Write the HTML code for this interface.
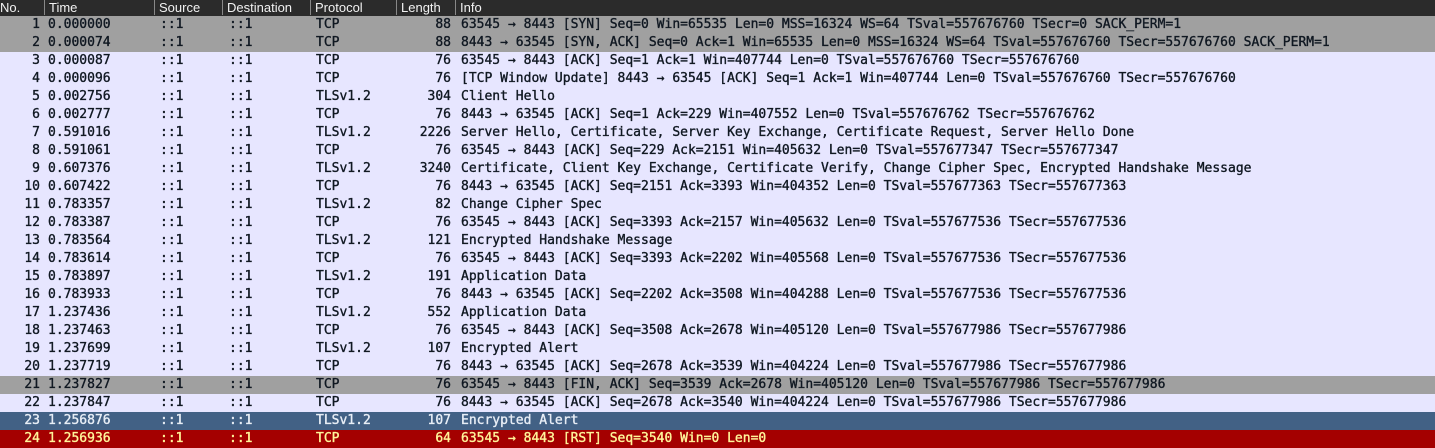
<!DOCTYPE html>
<html><head><meta charset="utf-8"><style>
body{margin:0;width:1435px;height:447px;overflow:hidden;background:#fff;}
.h{height:16px;background:#2b2b2b;color:#f2f2f2;font:13px "Liberation Sans",sans-serif;position:relative;}
.h span{position:absolute;top:0;line-height:15px;border-left:1px solid #888;padding-left:4px;}
.r{height:18px;position:relative;font:13px "DejaVu Sans Mono","Liberation Mono",monospace;line-height:18px;color:#101822;white-space:pre;-webkit-text-stroke:0.35px currentColor;}
.r span{position:absolute;top:0;}
.n{right:1395px;text-align:right}
.t{left:48px}.s{left:160px}.d{left:229px}.p{left:316px}
.l{right:984px;text-align:right}.i{left:461px}
.g{background:#a0a0a0}.w{background:#e7e6ff}
.b{background:#426185;color:#e8eef6}.x{background:#a40000;color:#fff59a}
</style></head><body>
<div class="h"><span style="left:-1px;border:none;padding-left:1px">No.</span><span style="left:44px">Time</span><span style="left:154px">Source</span><span style="left:222px">Destination</span><span style="left:310px">Protocol</span><span style="left:396px">Length</span><span style="left:455px">Info</span></div>
<div class="r g"><span class="n">1</span><span class="t">0.000000</span><span class="s">::1</span><span class="d">::1</span><span class="p">TCP</span><span class="l">88</span><span class="i">63545 → 8443 [SYN] Seq=0 Win=65535 Len=0 MSS=16324 WS=64 TSval=557676760 TSecr=0 SACK_PERM=1</span></div>
<div class="r g"><span class="n">2</span><span class="t">0.000074</span><span class="s">::1</span><span class="d">::1</span><span class="p">TCP</span><span class="l">88</span><span class="i">8443 → 63545 [SYN, ACK] Seq=0 Ack=1 Win=65535 Len=0 MSS=16324 WS=64 TSval=557676760 TSecr=557676760 SACK_PERM=1</span></div>
<div class="r w"><span class="n">3</span><span class="t">0.000087</span><span class="s">::1</span><span class="d">::1</span><span class="p">TCP</span><span class="l">76</span><span class="i">63545 → 8443 [ACK] Seq=1 Ack=1 Win=407744 Len=0 TSval=557676760 TSecr=557676760</span></div>
<div class="r w"><span class="n">4</span><span class="t">0.000096</span><span class="s">::1</span><span class="d">::1</span><span class="p">TCP</span><span class="l">76</span><span class="i">[TCP Window Update] 8443 → 63545 [ACK] Seq=1 Ack=1 Win=407744 Len=0 TSval=557676760 TSecr=557676760</span></div>
<div class="r w"><span class="n">5</span><span class="t">0.002756</span><span class="s">::1</span><span class="d">::1</span><span class="p">TLSv1.2</span><span class="l">304</span><span class="i">Client Hello</span></div>
<div class="r w"><span class="n">6</span><span class="t">0.002777</span><span class="s">::1</span><span class="d">::1</span><span class="p">TCP</span><span class="l">76</span><span class="i">8443 → 63545 [ACK] Seq=1 Ack=229 Win=407552 Len=0 TSval=557676762 TSecr=557676762</span></div>
<div class="r w"><span class="n">7</span><span class="t">0.591016</span><span class="s">::1</span><span class="d">::1</span><span class="p">TLSv1.2</span><span class="l">2226</span><span class="i">Server Hello, Certificate, Server Key Exchange, Certificate Request, Server Hello Done</span></div>
<div class="r w"><span class="n">8</span><span class="t">0.591061</span><span class="s">::1</span><span class="d">::1</span><span class="p">TCP</span><span class="l">76</span><span class="i">63545 → 8443 [ACK] Seq=229 Ack=2151 Win=405632 Len=0 TSval=557677347 TSecr=557677347</span></div>
<div class="r w"><span class="n">9</span><span class="t">0.607376</span><span class="s">::1</span><span class="d">::1</span><span class="p">TLSv1.2</span><span class="l">3240</span><span class="i">Certificate, Client Key Exchange, Certificate Verify, Change Cipher Spec, Encrypted Handshake Message</span></div>
<div class="r w"><span class="n">10</span><span class="t">0.607422</span><span class="s">::1</span><span class="d">::1</span><span class="p">TCP</span><span class="l">76</span><span class="i">8443 → 63545 [ACK] Seq=2151 Ack=3393 Win=404352 Len=0 TSval=557677363 TSecr=557677363</span></div>
<div class="r w"><span class="n">11</span><span class="t">0.783357</span><span class="s">::1</span><span class="d">::1</span><span class="p">TLSv1.2</span><span class="l">82</span><span class="i">Change Cipher Spec</span></div>
<div class="r w"><span class="n">12</span><span class="t">0.783387</span><span class="s">::1</span><span class="d">::1</span><span class="p">TCP</span><span class="l">76</span><span class="i">63545 → 8443 [ACK] Seq=3393 Ack=2157 Win=405632 Len=0 TSval=557677536 TSecr=557677536</span></div>
<div class="r w"><span class="n">13</span><span class="t">0.783564</span><span class="s">::1</span><span class="d">::1</span><span class="p">TLSv1.2</span><span class="l">121</span><span class="i">Encrypted Handshake Message</span></div>
<div class="r w"><span class="n">14</span><span class="t">0.783614</span><span class="s">::1</span><span class="d">::1</span><span class="p">TCP</span><span class="l">76</span><span class="i">63545 → 8443 [ACK] Seq=3393 Ack=2202 Win=405568 Len=0 TSval=557677536 TSecr=557677536</span></div>
<div class="r w"><span class="n">15</span><span class="t">0.783897</span><span class="s">::1</span><span class="d">::1</span><span class="p">TLSv1.2</span><span class="l">191</span><span class="i">Application Data</span></div>
<div class="r w"><span class="n">16</span><span class="t">0.783933</span><span class="s">::1</span><span class="d">::1</span><span class="p">TCP</span><span class="l">76</span><span class="i">8443 → 63545 [ACK] Seq=2202 Ack=3508 Win=404288 Len=0 TSval=557677536 TSecr=557677536</span></div>
<div class="r w"><span class="n">17</span><span class="t">1.237436</span><span class="s">::1</span><span class="d">::1</span><span class="p">TLSv1.2</span><span class="l">552</span><span class="i">Application Data</span></div>
<div class="r w"><span class="n">18</span><span class="t">1.237463</span><span class="s">::1</span><span class="d">::1</span><span class="p">TCP</span><span class="l">76</span><span class="i">63545 → 8443 [ACK] Seq=3508 Ack=2678 Win=405120 Len=0 TSval=557677986 TSecr=557677986</span></div>
<div class="r w"><span class="n">19</span><span class="t">1.237699</span><span class="s">::1</span><span class="d">::1</span><span class="p">TLSv1.2</span><span class="l">107</span><span class="i">Encrypted Alert</span></div>
<div class="r w"><span class="n">20</span><span class="t">1.237719</span><span class="s">::1</span><span class="d">::1</span><span class="p">TCP</span><span class="l">76</span><span class="i">8443 → 63545 [ACK] Seq=2678 Ack=3539 Win=404224 Len=0 TSval=557677986 TSecr=557677986</span></div>
<div class="r g"><span class="n">21</span><span class="t">1.237827</span><span class="s">::1</span><span class="d">::1</span><span class="p">TCP</span><span class="l">76</span><span class="i">63545 → 8443 [FIN, ACK] Seq=3539 Ack=2678 Win=405120 Len=0 TSval=557677986 TSecr=557677986</span></div>
<div class="r w"><span class="n">22</span><span class="t">1.237847</span><span class="s">::1</span><span class="d">::1</span><span class="p">TCP</span><span class="l">76</span><span class="i">8443 → 63545 [ACK] Seq=2678 Ack=3540 Win=404224 Len=0 TSval=557677986 TSecr=557677986</span></div>
<div class="r b"><span class="n">23</span><span class="t">1.256876</span><span class="s">::1</span><span class="d">::1</span><span class="p">TLSv1.2</span><span class="l">107</span><span class="i">Encrypted Alert</span></div>
<div class="r x"><span class="n">24</span><span class="t">1.256936</span><span class="s">::1</span><span class="d">::1</span><span class="p">TCP</span><span class="l">64</span><span class="i">63545 → 8443 [RST] Seq=3540 Win=0 Len=0</span></div>
</body></html>
